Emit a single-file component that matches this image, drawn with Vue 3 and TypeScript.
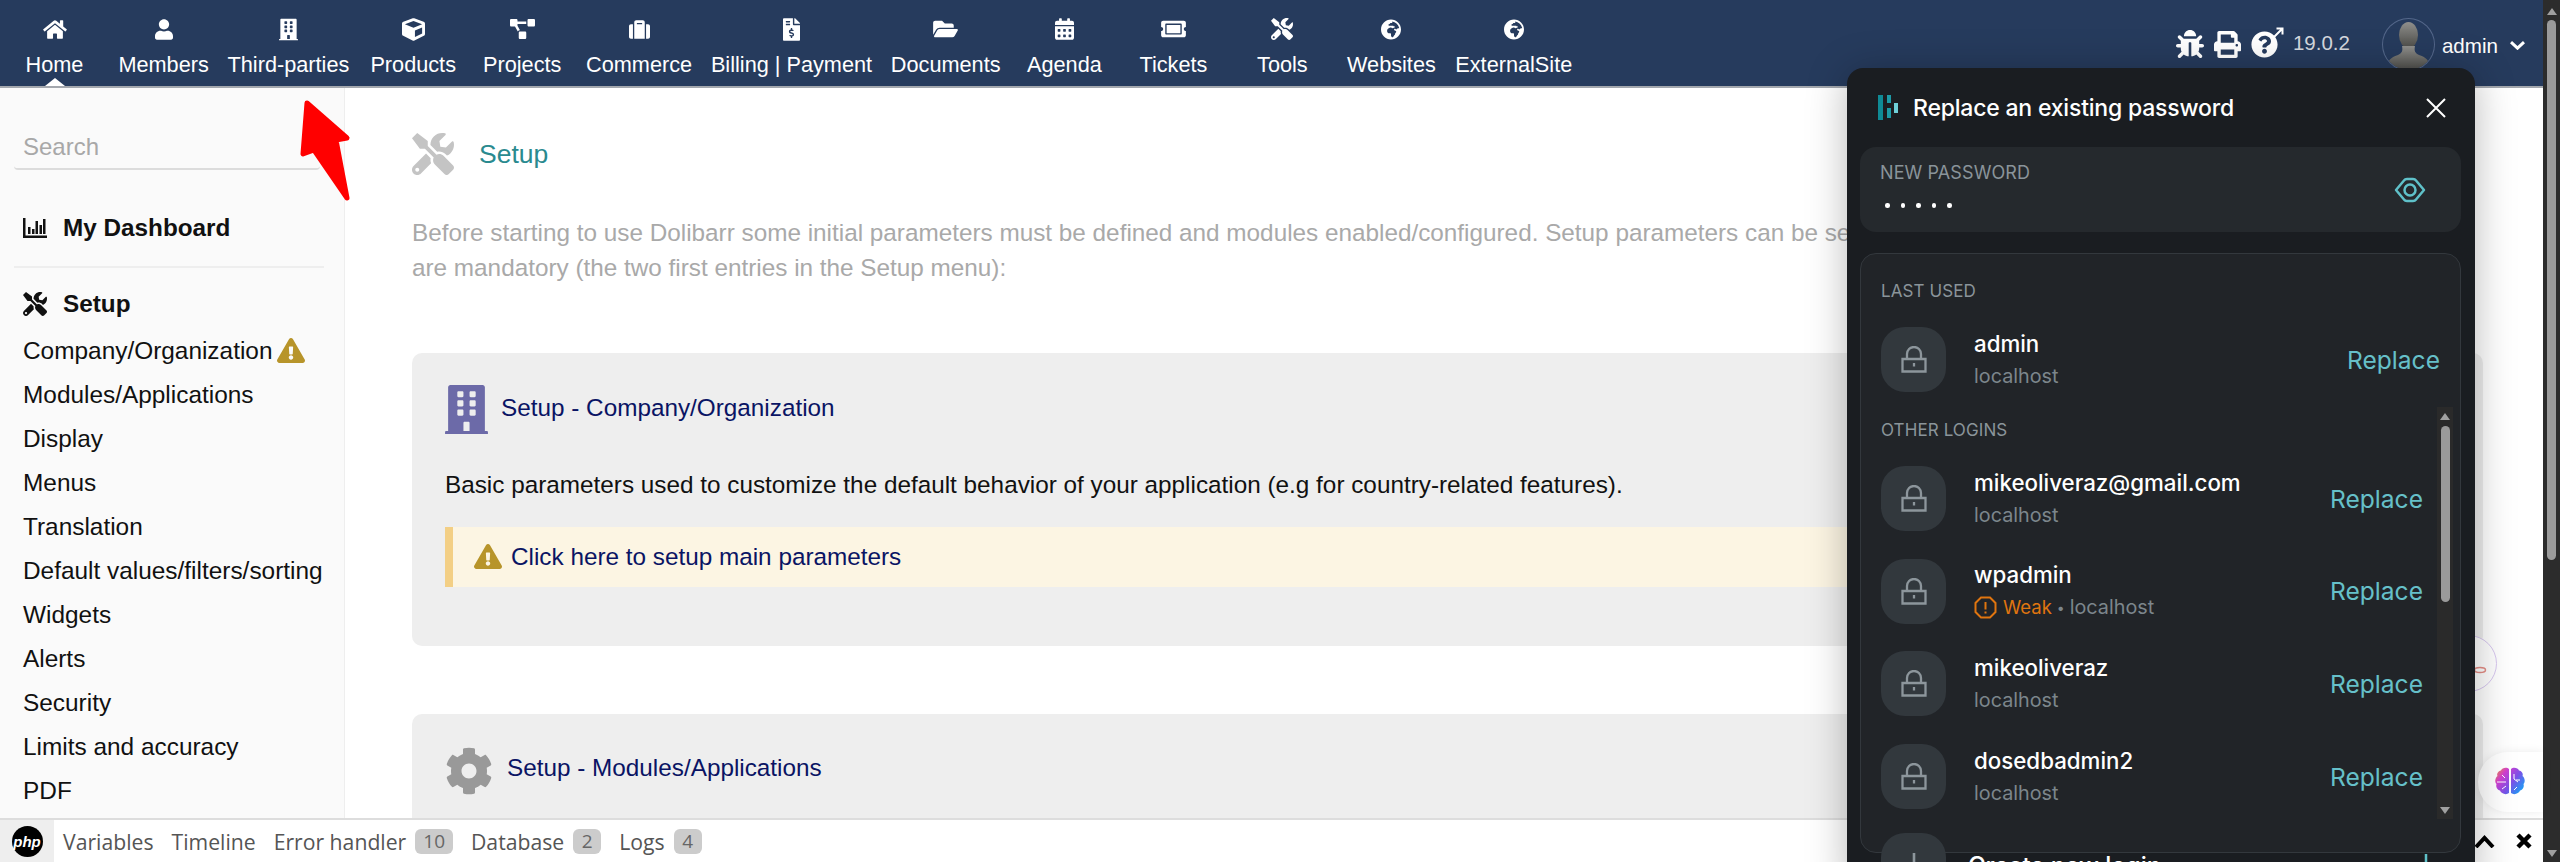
<script setup lang="ts">
interface Glyph { vb: string; d: string }

const icons: Record<string, Glyph> = {
  home: { vb: '0 0 576 512', d: 'M280.37 148.26L96 300.11V464a16 16 0 0 0 16 16l112.06-.29a16 16 0 0 0 15.92-16V368a16 16 0 0 1 16-16h64a16 16 0 0 1 16 16v95.64a16 16 0 0 0 16 16.05L464 480a16 16 0 0 0 16-16V300L295.67 148.26a12.19 12.19 0 0 0-15.3 0zM571.6 251.47L488 182.56V44.05a12 12 0 0 0-12-12h-56a12 12 0 0 0-12 12v72.61L318.47 43a48 48 0 0 0-61 0L4.34 251.47a12 12 0 0 0-1.6 16.9l25.5 31A12 12 0 0 0 45.15 301l235.22-193.74a12.19 12.19 0 0 1 15.3 0L530.9 301a12 12 0 0 0 16.9-1.6l25.5-31a12 12 0 0 0-1.7-16.93z' },
  user: { vb: '0 0 448 512', d: 'M224 256c70.7 0 128-57.3 128-128S294.7 0 224 0 96 57.3 96 128s57.3 128 128 128zm89.6 32h-16.7c-22.2 10.2-46.9 16-72.9 16s-50.6-5.8-72.9-16h-16.7C60.2 288 0 348.2 0 422.4V464c0 26.5 21.5 48 48 48h352c26.5 0 48-21.5 48-48v-41.6c0-74.2-60.2-134.4-134.4-134.4z' },
  building: { vb: '0 0 448 512', d: 'M436 480h-20V24c0-13.255-10.745-24-24-24H56C42.745 0 32 10.745 32 24v456H12c-6.627 0-12 5.373-12 12v20h448v-20c0-6.627-5.373-12-12-12zM128 76c0-6.627 5.373-12 12-12h40c6.627 0 12 5.373 12 12v40c0 6.627-5.373 12-12 12h-40c-6.627 0-12-5.373-12-12V76zm0 96c0-6.627 5.373-12 12-12h40c6.627 0 12 5.373 12 12v40c0 6.627-5.373 12-12 12h-40c-6.627 0-12-5.373-12-12v-40zm52 148h-40c-6.627 0-12-5.373-12-12v-40c0-6.627 5.373-12 12-12h40c6.627 0 12 5.373 12 12v40c0 6.627-5.373 12-12 12zm76 160h-64v-84c0-6.627 5.373-12 12-12h40c6.627 0 12 5.373 12 12v84zm64-172c0 6.627-5.373 12-12 12h-40c-6.627 0-12-5.373-12-12v-40c0-6.627 5.373-12 12-12h40c6.627 0 12 5.373 12 12v40zm0-96c0 6.627-5.373 12-12 12h-40c-6.627 0-12-5.373-12-12v-40c0-6.627 5.373-12 12-12h40c6.627 0 12 5.373 12 12v40zm0-96c0 6.627-5.373 12-12 12h-40c-6.627 0-12-5.373-12-12V76c0-6.627 5.373-12 12-12h40c6.627 0 12 5.373 12 12v40z' },
  cube: { vb: '0 0 512 512', d: 'M239.1 6.3l-208 78c-18.7 7-31.1 25-31.1 45v225.1c0 18.2 10.3 34.8 26.5 42.9l208 104c13.5 6.8 29.4 6.8 42.9 0l208-104c16.3-8.1 26.5-24.8 26.5-42.9V129.3c0-20-12.4-37.9-31.1-44.9l-208-78C262 2.2 250 2.2 239.1 6.3zM256 68.4l192 72v1.1l-192 78-192-78v-1.1l192-72zm32 356V275.5l160-65v133.9l-160 80z' },
  project: { vb: '0 0 640 512', d: 'M384 320H256c-17.67 0-32 14.33-32 32v128c0 17.67 14.33 32 32 32h128c17.67 0 32-14.33 32-32V352c0-17.67-14.33-32-32-32zM192 32c0-17.67-14.33-32-32-32H32C14.33 0 0 14.33 0 32v128c0 17.67 14.33 32 32 32h95.72l73.16 128.04C211.98 300.98 232.4 288 256 288h.28L192 175.51V128h224V64H192V32zM608 0H480c-17.67 0-32 14.33-32 32v128c0 17.67 14.33 32 32 32h128c17.67 0 32-14.33 32-32V32c0-17.67-14.33-32-32-32z' },
  suitcase: { vb: '0 0 512 512', d: 'M128 480h256V80c0-26.5-21.5-48-48-48H176c-26.5 0-48 21.5-48 48v400zm64-384h128v32H192V96zm320 80v256c0 26.5-21.5 48-48 48h-48V128h48c26.5 0 48 21.5 48 48zM96 480H48c-26.5 0-48-21.5-48-48V176c0-26.5 21.5-48 48-48h48v352z' },
  invoice: { vb: '0 0 384 512', d: 'M377 105L279.1 7c-4.5-4.5-10.6-7-17-7H256v128h128v-6.1c0-6.3-2.5-12.4-7-16.9zm-153 31V0H24C10.7 0 0 10.7 0 24v464c0 13.3 10.7 24 24 24h336c13.3 0 24-10.7 24-24V160H248c-13.2 0-24-10.8-24-24zM64 72c0-4.42 3.58-8 8-8h80c4.42 0 8 3.58 8 8v16c0 4.42-3.58 8-8 8H72c-4.42 0-8-3.58-8-8V72zm0 80v-16c0-4.42 3.58-8 8-8h80c4.42 0 8 3.58 8 8v16c0 4.42-3.58 8-8 8H72c-4.42 0-8-3.58-8-8zm144 263.88V440c0 4.42-3.58 8-8 8h-16c-4.42 0-8-3.58-8-8v-24.29c-11.29-.58-22.27-4.52-31.37-11.35-3.9-2.93-4.1-8.77-.57-12.14l11.75-11.21c2.77-2.64 6.89-2.76 10.13-.73 3.87 2.42 8.26 3.72 12.82 3.72h28.11c6.5 0 11.8-5.92 11.8-13.19 0-5.95-3.61-11.19-8.77-12.73l-45-13.5c-18.59-5.58-31.58-23.42-31.58-43.39 0-24.52 19.05-44.44 42.67-45.07V232c0-4.42 3.58-8 8-8h16c4.42 0 8 3.58 8 8v24.29c11.29.58 22.27 4.51 31.37 11.35 3.9 2.93 4.1 8.77.57 12.14l-11.75 11.21c-2.77 2.64-6.89 2.76-10.13.73-3.87-2.43-8.26-3.72-12.82-3.72h-28.11c-6.5 0-11.8 5.92-11.8 13.19 0 5.95 3.61 11.19 8.77 12.73l45 13.5c18.59 5.58 31.58 23.42 31.58 43.39 0 24.53-19.05 44.44-42.67 45.07z' },
  folder: { vb: '0 0 576 512', d: 'M572.694 292.093L500.27 416.248A63.997 63.997 0 0 1 444.989 448H45.025c-18.523 0-30.064-20.093-20.731-36.093l72.424-124.155A64 64 0 0 1 152 256h399.964c18.523 0 30.064 20.093 20.73 36.093zM152 224h328v-48c0-26.51-21.49-48-48-48H272l-64-64H48C21.49 64 0 85.49 0 112v278.046l69.077-118.418C86.214 242.25 117.989 224 152 224z' },
  calendar: { vb: '0 0 448 512', d: 'M0 464c0 26.5 21.5 48 48 48h352c26.5 0 48-21.5 48-48V192H0v272zm320-196c0-6.6 5.4-12 12-12h40c6.6 0 12 5.4 12 12v40c0 6.6-5.4 12-12 12h-40c-6.6 0-12-5.4-12-12v-40zm0 128c0-6.6 5.4-12 12-12h40c6.6 0 12 5.4 12 12v40c0 6.6-5.4 12-12 12h-40c-6.6 0-12-5.4-12-12v-40zM192 268c0-6.6 5.4-12 12-12h40c6.6 0 12 5.4 12 12v40c0 6.6-5.4 12-12 12h-40c-6.6 0-12-5.4-12-12v-40zm0 128c0-6.6 5.4-12 12-12h40c6.6 0 12 5.4 12 12v40c0 6.6-5.4 12-12 12h-40c-6.6 0-12-5.4-12-12v-40zM64 268c0-6.6 5.4-12 12-12h40c6.6 0 12 5.4 12 12v40c0 6.6-5.4 12-12 12H76c-6.6 0-12-5.4-12-12v-40zm0 128c0-6.6 5.4-12 12-12h40c6.6 0 12 5.4 12 12v40c0 6.6-5.4 12-12 12H76c-6.6 0-12-5.4-12-12v-40zM400 64h-48V16c0-8.8-7.2-16-16-16h-32c-8.8 0-16 7.2-16 16v48H160V16c0-8.8-7.2-16-16-16h-32c-8.8 0-16 7.2-16 16v48H48C21.5 64 0 85.5 0 112v48h448v-48c0-26.5-21.5-48-48-48z' },
  ticket: { vb: '0 0 576 512', d: 'M128 160h320v192H128V160zm400 96c0 26.51 21.49 48 48 48v96c0 26.51-21.49 48-48 48H48c-26.51 0-48-21.49-48-48v-96c26.51 0 48-21.49 48-48s-21.49-48-48-48v-96c0-26.51 21.49-48 48-48h480c26.51 0 48 21.49 48 48v96c-26.51 0-48 21.49-48 48zm-48-104c0-13.255-10.745-24-24-24H120c-13.255 0-24 10.745-24 24v208c0 13.255 10.745 24 24 24h336c13.255 0 24-10.745 24-24V152z' },
  tools: { vb: '0 0 512 512', d: 'M501.1 395.7L384 278.6c-23.1-23.1-57.6-27.6-85.4-13.9L192 158.1V96L64 0 0 64l96 128h62.1l106.6 106.6c-13.6 27.8-9.2 62.3 13.9 85.4l117.1 117.1c14.6 14.6 38.2 14.6 52.7 0l52.7-52.7c14.5-14.6 14.5-38.2 0-52.7zM331.7 225c28.3 0 54.9 11 74.9 31l19.4 19.4c15.8-6.9 30.8-16.5 43.8-29.5 37.1-37.1 49.7-89.3 37.9-136.7-2.2-9-13.5-12.1-20.1-5.5l-74.4 74.4-67.9-11.3L334 98.9l74.4-74.4c6.6-6.6 3.4-17.9-5.7-20.2-47.4-11.7-99.6.9-136.6 37.9-28.5 28.5-41.9 66.1-41.2 103.6l82.1 82.1c8.1-1.9 16.5-2.9 24.7-2.9zm-103.9 82l-56.7-56.7L18.7 402.8c-25 25-25 65.5 0 90.5s65.5 25 90.5 0l123.6-123.6c-7.6-19.9-9.9-41.6-5-62.7zM64 472c-13.2 0-24-10.8-24-24 0-13.3 10.7-24 24-24s24 10.7 24 24c0 13.2-10.7 24-24 24z' },
  globe: { vb: '0 0 496 512', d: 'M248 8C111.03 8 0 119.03 0 256s111.03 248 248 248 248-111.03 248-248S384.97 8 248 8zm160 215.5v6.93c0 5.87-3.32 11.24-8.57 13.86l-15.39 7.7a15.485 15.485 0 0 1-15.53-.97l-18.21-12.14a15.52 15.52 0 0 0-13.5-1.81l-2.65.88c-9.7 3.23-13.66 14.79-7.99 23.3l13.24 19.86c2.87 4.31 7.71 6.9 12.89 6.9h8.21c8.56 0 15.5 6.94 15.5 15.5v11.34c0 3.35-1.09 6.62-3.1 9.3l-18.74 24.98c-1.42 1.9-2.39 4.1-2.83 6.43l-4.3 22.83c-.62 3.29-2.29 6.29-4.76 8.56a159.608 159.608 0 0 0-25 29.16l-13.03 19.55a27.756 27.756 0 0 1-23.09 12.36c-10.51 0-20.12-5.94-24.82-15.34a78.902 78.902 0 0 1-8.33-35.29V367.5c0-8.56-6.94-15.5-15.5-15.5h-25.88c-14.49 0-28.38-5.76-38.63-16a54.659 54.659 0 0 1-16-38.63v-14.06c0-17.19 8.1-33.38 21.85-43.7l27.58-20.69a54.663 54.663 0 0 1 32.78-10.93h.89c8.48 0 16.85 1.97 24.43 5.77l14.72 7.36c3.68 1.84 7.93 2.14 11.83.84l47.31-15.77c6.33-2.11 10.6-8.03 10.6-14.7 0-8.56-6.94-15.5-15.5-15.5h-10.09c-4.11 0-8.05-1.63-10.96-4.54l-6.92-6.92a15.493 15.493 0 0 0-10.96-4.54H199.5c-8.56 0-15.5-6.94-15.5-15.5v-4.4c0-7.11 4.84-13.31 11.74-15.04l14.45-3.61c3.74-.94 7-3.23 9.14-6.44l8.08-12.11c2.87-4.31 7.71-6.9 12.89-6.9h24.21c8.56 0 15.5-6.94 15.5-15.5v-21.7C359.23 71.63 422.86 131.02 448 208v15.5z' },
  bug: { vb: '0 0 512 512', d: 'M511.988 288.9c-.478 17.43-15.217 31.1-32.653 31.1H424v16c0 21.864-4.882 42.584-13.6 61.145l60.228 60.228c12.496 12.497 12.496 32.758 0 45.255-12.498 12.497-32.759 12.496-45.256 0l-54.736-54.736C345.886 467.965 314.351 480 280 480V236c0-6.627-5.373-12-12-12h-24c-6.627 0-12 5.373-12 12v244c-34.351 0-65.886-12.035-90.636-32.108l-54.736 54.736c-12.498 12.497-32.759 12.496-45.256 0-12.496-12.497-12.496-32.758 0-45.255l60.228-60.228C92.882 378.584 88 357.864 88 336v-16H32.666C15.23 320 .491 306.33.013 288.9-.484 270.816 14.028 256 32 256h56v-58.745l-46.628-46.628c-12.496-12.497-12.496-32.758 0-45.255 12.498-12.497 32.758-12.497 45.256 0L141.255 160h229.489l54.627-54.627c12.498-12.497 32.758-12.497 45.256 0 12.496 12.497 12.496 32.758 0 45.255L424 197.255V256h56c17.972 0 32.484 14.816 31.988 32.9zM257 0c-61.856 0-112 50.144-112 112h224C369 50.144 318.856 0 257 0z' },
  print: { vb: '0 0 512 512', d: 'M448 192V77.25c0-8.49-3.37-16.62-9.37-22.63L393.37 9.37c-6-6-14.14-9.37-22.63-9.37H96C78.33 0 64 14.33 64 32v160c-35.35 0-64 28.65-64 64v112c0 8.84 7.16 16 16 16h48v96c0 17.67 14.33 32 32 32h320c17.67 0 32-14.33 32-32v-96h48c8.84 0 16-7.16 16-16V256c0-35.35-28.65-64-64-64zm-64 256H128v-96h256v96zm0-224H128V64h192v48c0 8.84 7.16 16 16 16h48v96zm48 72c-13.25 0-24-10.75-24-24 0-13.26 10.75-24 24-24s24 10.74 24 24c0 13.25-10.75 24-24 24z' },
  question: { vb: '0 0 512 512', d: 'M504 256c0 136.997-111.043 248-248 248S8 392.997 8 256C8 119.083 119.043 8 256 8s248 111.083 248 248zM262.655 90c-54.497 0-89.255 22.957-116.549 63.758-3.536 5.286-2.353 12.415 2.715 16.258l34.699 26.31c5.205 3.947 12.621 3.008 16.665-2.122 17.864-22.658 30.113-35.797 57.303-35.797 20.429 0 45.698 13.148 45.698 32.958 0 14.976-12.363 22.667-32.534 33.976C247.128 238.528 216 254.941 216 296v4c0 6.627 5.373 12 12 12h56c6.627 0 12-5.373 12-12v-1.333c0-28.462 83.186-29.647 83.186-106.667 0-58.002-60.165-102-116.531-102zM256 338c-25.365 0-46 20.635-46 46 0 25.364 20.635 46 46 46s46-20.636 46-46c0-25.365-20.635-46-46-46z' },
  warning: { vb: '0 0 576 512', d: 'M569.517 440.013C587.975 472.007 564.806 512 527.94 512H48.054c-36.937 0-59.999-40.055-41.577-71.987L246.423 24.987c18.467-32.009 64.72-31.951 83.154 0l239.94 416.026zM288 354c-25.405 0-46 20.595-46 46s20.595 46 46 46 46-20.595 46-46-20.595-46-46-46zm-43.673-165.346l7.418 136c.347 6.364 5.609 11.346 11.982 11.346h48.546c6.373 0 11.635-4.982 11.982-11.346l7.418-136c.375-6.874-5.098-12.654-11.982-12.654h-63.383c-6.884 0-12.356 5.78-11.981 12.654z' },
  cog: { vb: '0 0 512 512', d: 'M487.4 315.7l-42.6-24.6c4.3-23.2 4.3-47 0-70.2l42.6-24.6c4.9-2.8 7.1-8.6 5.5-14-11.1-35.6-30-67.8-54.7-94.6-3.8-4.1-10-5.1-14.8-2.3L380.8 110c-17.9-15.4-38.5-27.3-60.8-35.1V25.8c0-5.6-3.9-10.5-9.4-11.7-36.7-8.2-74.3-7.8-109.2 0-5.5 1.2-9.4 6.1-9.4 11.7V75c-22.2 7.9-42.8 19.8-60.8 35.1L88.7 85.5c-4.9-2.8-11-1.9-14.8 2.3-24.7 26.7-43.6 58.9-54.7 94.6-1.7 5.4.6 11.2 5.5 14L67.3 221c-4.3 23.2-4.3 47 0 70.2l-42.6 24.6c-4.9 2.8-7.1 8.6-5.5 14 11.1 35.6 30 67.8 54.7 94.6 3.8 4.1 10 5.1 14.8 2.3l42.6-24.6c17.9 15.4 38.5 27.3 60.8 35.1v49.2c0 5.6 3.9 10.5 9.4 11.7 36.7 8.2 74.3 7.8 109.2 0 5.5-1.2 9.4-6.1 9.4-11.7v-49.2c22.2-7.9 42.8-19.8 60.8-35.1l42.6 24.6c4.9 2.8 11 1.9 14.8-2.3 24.7-26.7 43.6-58.9 54.7-94.6 1.5-5.5-.7-11.3-5.6-14.1zM256 336c-44.1 0-80-35.9-80-80s35.9-80 80-80 80 35.9 80 80-35.9 80-80 80z' }
};

const navItems = [
  { label: 'Home', icon: 'home', w: 24, h: 21, active: true },
  { label: 'Members', icon: 'user', w: 18, h: 21 },
  { label: 'Third-parties', icon: 'building', w: 19, h: 23 },
  { label: 'Products', icon: 'cube', w: 23, h: 23 },
  { label: 'Projects', icon: 'project', w: 25, h: 20 },
  { label: 'Commerce', icon: 'suitcase', w: 21, h: 21 },
  { label: 'Billing | Payment', icon: 'invoice', w: 17, h: 23 },
  { label: 'Documents', icon: 'folder', w: 25, h: 22 },
  { label: 'Agenda', icon: 'calendar', w: 19, h: 22 },
  { label: 'Tickets', icon: 'ticket', w: 25, h: 22 },
  { label: 'Tools', icon: 'tools', w: 22, h: 22 },
  { label: 'Websites', icon: 'globe', w: 20, h: 21 },
  { label: 'ExternalSite', icon: 'globe', w: 20, h: 21 }
];

const setupLinks = [
  'Modules/Applications', 'Display', 'Menus', 'Translation', 'Default values/filters/sorting',
  'Widgets', 'Alerts', 'Security', 'Limits and accuracy', 'PDF'
];

const debugTabs = [
  { label: 'Variables' },
  { label: 'Timeline' },
  { label: 'Error handler', count: 10 },
  { label: 'Database', count: 2 },
  { label: 'Logs', count: 4 }
];

const otherLogins = [
  { name: 'mikeoliveraz@gmail.com', weak: false },
  { name: 'wpadmin', weak: true },
  { name: 'mikeoliveraz', weak: false },
  { name: 'dosedbadmin2', weak: false }
];
</script>

<template>
  <div class="app">
    <div class="page">
      <header class="topbar">
        <nav class="menu">
          <a v-for="item in navItems" :key="item.label" class="menu-item">
            <span class="menu-icon">
              <svg :viewBox="icons[item.icon].vb" :width="item.w" :height="item.h" fill="#fff"><path :d="icons[item.icon].d" /></svg>
            </span>
            <span class="menu-label">{{ item.label }}</span>
            <i v-if="item.active" class="menu-caret"></i>
          </a>
        </nav>
        <div class="top-right">
          <svg :viewBox="icons.bug.vb" width="28" height="28" fill="#fff"><path :d="icons.bug.d" /></svg>
          <svg :viewBox="icons.print.vb" width="27" height="27" fill="#fff"><path :d="icons.print.d" /></svg>
          <span class="help">
            <svg :viewBox="icons.question.vb" width="27" height="27" fill="#fff"><path :d="icons.question.d" /></svg>
            <svg class="help-arrow" viewBox="0 0 12 12" width="12" height="12" fill="none" stroke="#fff" stroke-width="2"><path d="M1 11 10 2M4.500 1.500H10.500V7.500" /></svg>
          </span>
          <span class="version">19.0.2</span>
          <span class="avatar">
            <svg viewBox="0 0 51 51" width="51" height="51">
              <defs>
                <linearGradient id="bust" x1="0" y1="0" x2="0" y2="1">
                  <stop offset="0" stop-color="#8f8f8c" />
                  <stop offset="1" stop-color="#4c4c48" />
                </linearGradient>
              </defs>
              <ellipse cx="25.500" cy="16" rx="9.500" ry="13" fill="url(#bust)" />
              <path d="M19 27c1 5 0 7-4 9-6 2-9 4-10 9l2 6h37l2-6c-1-5-4-7-10-9-4-2-5-4-4-9z" fill="url(#bust)" />
            </svg>
          </span>
          <span class="user-name">admin</span>
          <svg viewBox="0 0 15 9" width="15" height="9" fill="none" stroke="#fff" stroke-width="3" class="user-chevron"><path d="M1 1.200 7.500 7.200 14 1.200" /></svg>
        </div>
      </header>

      <div class="content">
        <aside class="sidebar">
          <input class="search" placeholder="Search" />
          <div class="side-head">
            <svg viewBox="0 0 24 20" width="24" height="20" fill="#111">
              <path d="M0 0h2.500v17.500H24V20H0z" />
              <path d="M5 9h2.500v7H5zM9 11h2.500v5H9zM12.500 3H15v13h-2.500zM16.500 7H19v9h-2.500zM20 1h2.500v15H20z" />
            </svg>
            <span>My Dashboard</span>
          </div>
          <div class="side-divider"></div>
          <div class="side-head">
            <svg :viewBox="icons.tools.vb" width="24" height="24" fill="#111"><path :d="icons.tools.d" /></svg>
            <span>Setup</span>
          </div>
          <a class="side-link">
            Company/Organization
            <svg :viewBox="icons.warning.vb" width="28" height="25" fill="#b7942a"><path :d="icons.warning.d" /></svg>
          </a>
          <a v-for="link in setupLinks" :key="link" class="side-link">{{ link }}</a>
        </aside>

        <main class="main">
          <div class="page-title">
            <svg :viewBox="icons.tools.vb" width="42" height="42" fill="#c4c4c4"><path :d="icons.tools.d" /></svg>
            <span>Setup</span>
          </div>
          <p class="intro">
            Before starting to use Dolibarr some initial parameters must be defined and modules enabled/configured. Setup parameters can be set from the menu on the left. The following two sections<br />
            are mandatory (the two first entries in the Setup menu):
          </p>

          <section class="card">
            <div class="card-title">
              <svg :viewBox="icons.building.vb" width="43" height="49" fill="#6c6aa8"><path :d="icons.building.d" /></svg>
              <a>Setup - Company/Organization</a>
            </div>
            <p class="card-text">Basic parameters used to customize the default behavior of your application (e.g for country-related features).</p>
            <div class="notice">
              <svg :viewBox="icons.warning.vb" width="28" height="25" fill="#b7942a"><path :d="icons.warning.d" /></svg>
              <a>Click here to setup main parameters</a>
            </div>
          </section>

          <section class="card card-modules">
            <div class="card-title">
              <svg :viewBox="icons.cog.vb" width="48" height="48" fill="#999"><path :d="icons.cog.d" /></svg>
              <a>Setup - Modules/Applications</a>
            </div>
          </section>
        </main>
      </div>

      <footer class="debugbar">
        <span class="php-tab"><span class="php-logo">php</span></span>
        <div class="debug-tabs">
          <span v-for="tab in debugTabs" :key="tab.label" class="debug-tab">
            {{ tab.label }}
            <b v-if="tab.count" class="debug-count">{{ tab.count }}</b>
          </span>
        </div>
        <div class="debug-actions">
          <svg viewBox="0 0 21 13" width="21" height="13" fill="none" stroke="#000" stroke-width="4"><path d="M2 12 10.500 3 19 12" /></svg>
          <svg viewBox="0 0 16 16" width="16" height="16" fill="none" stroke="#000" stroke-width="4.500"><path d="M2 2 14 14M14 2 2 14" /></svg>
        </div>
      </footer>
    </div>

    <div class="page-scroll">
      <i class="arrow-up"></i>
      <i class="scroll-thumb"></i>
      <i class="arrow-down"></i>
    </div>

    <!-- red pointer drawn over the screenshot -->
    <svg class="pointer" viewBox="0 0 60 115" width="60" height="115" fill="#f00" stroke="#f00" stroke-width="5" stroke-linejoin="round">
      <path d="M12 8 52 43 41 45 52 103 19 55 8 59z" />
    </svg>

    <span class="float-badge">
      <svg viewBox="0 0 14 8" width="14" height="8" fill="none" stroke="#e58e86" stroke-width="1.500"><ellipse cx="7" cy="4" rx="5.500" ry="2.500" /></svg>
    </span>

    <button class="brain-btn" aria-label="AI assistant">
      <svg viewBox="0 0 32 32" width="32" height="32">
        <defs>
          <linearGradient id="brain" x1="0" y1="0" x2="1" y2="0.700">
            <stop offset="0" stop-color="#f59a2f" />
            <stop offset="0.300" stop-color="#d33fd0" />
            <stop offset="0.650" stop-color="#7b52e8" />
            <stop offset="1" stop-color="#1f9bf5" />
          </linearGradient>
        </defs>
        <path fill="url(#brain)" d="M15 3c-2-2-7-1.500-8 1.500C4 5 2.500 8 3.500 10 1 12 .5 16 2.500 18c-1 3 1 6 3.500 6.500 1 3 6 5 9 2.500zM17 3c2-2 7-1.500 8 1.500 3 .5 4.500 3.500 3.500 5.500 2.500 2 3 6 1 8 1 3-1 6-3.500 6.500-1 3-6 5-9 2.500z" />
        <path fill="none" stroke="#fff" stroke-width="1" d="M3 16h9M8 9l3 3M8 23l4-3M20 8v5l4 3M20 24l3-3M26 14h-4" />
      </svg>
    </button>

    <!-- password manager popup, sits on top of the page -->
    <div class="vault">
      <div class="vault-head">
        <svg viewBox="0 0 20 25" width="20" height="25">
          <path fill="#0f8a95" d="M0 0h5v25H0z" />
          <path fill="#1d9aa6" d="M9 0h4v8H9zM9 13h4v10H9z" />
          <path fill="#6fd0d8" d="M16 8h4v10h-4z" />
        </svg>
        <span class="vault-title">Replace an existing password</span>
        <svg class="vault-close" viewBox="0 0 20 20" width="20" height="20" fill="none" stroke="#fff" stroke-width="2"><path d="M1 1 19 19M19 1 1 19" /></svg>
      </div>

      <div class="pw-box">
        <div class="pw-info">
          <span class="caps">NEW PASSWORD</span>
          <span class="pw-dots"><i v-for="n in 5" :key="n"></i></span>
        </div>
        <svg viewBox="0 0 32 32" width="32" height="32" fill="none" stroke="#5fc1c9" stroke-width="2.500" stroke-linejoin="round">
          <path d="M2 16 10 6.500Q11 5 13 5H19Q21 5 22 6.500L30 16 22 25.500Q21 27 19 27H13Q11 27 10 25.500z" />
          <circle cx="16" cy="16" r="5.500" />
        </svg>
      </div>

      <div class="list-box">
        <div class="caps list-label">LAST USED</div>
        <div class="login login-last">
          <span class="tile">
            <svg viewBox="0 0 26 27" width="26" height="27" fill="none" stroke="#8d969c" stroke-width="2.300">
              <path d="M6 13V8a7 7 0 0 1 14 0v5M1.500 13h23v12.500h-23z" />
              <path d="M13 17v3.500" />
            </svg>
          </span>
          <span class="login-text">
            <span class="login-name">admin</span>
            <span class="login-site">localhost</span>
          </span>
          <a class="replace">Replace</a>
        </div>

        <div class="other">
          <div class="other-list">
            <div class="caps list-label">OTHER LOGINS</div>
            <div v-for="entry in otherLogins" :key="entry.name" class="login">
              <span class="tile">
                <svg viewBox="0 0 26 27" width="26" height="27" fill="none" stroke="#8d969c" stroke-width="2.300">
                  <path d="M6 13V8a7 7 0 0 1 14 0v5M1.500 13h23v12.500h-23z" />
                  <path d="M13 17v3.500" />
                </svg>
              </span>
              <span class="login-text">
                <span class="login-name">{{ entry.name }}</span>
                <span class="login-site">
                  <template v-if="entry.weak">
                    <svg class="weak-icon" viewBox="0 0 23 23" width="23" height="23" fill="none" stroke="#e0750f" stroke-width="2"><path d="M7 1.500h9l5.500 5.500v9L16 21.500H7L1.500 16V7z" /><path d="M11.500 6v7.500M11.500 15.500v2" /></svg>
                    <span class="weak">Weak</span>
                    <span class="sep">•</span>
                  </template>
                  localhost
                </span>
              </span>
              <a class="replace">Replace</a>
            </div>
          </div>
          <div class="mini-scroll">
            <i class="arrow-up"></i>
            <i class="mini-thumb"></i>
            <i class="arrow-down"></i>
          </div>
        </div>

        <div class="login login-create">
          <span class="tile">
            <svg viewBox="0 0 28 28" width="28" height="28" fill="none" stroke="#8d969c" stroke-width="2.600"><path d="M14 1v26M1 14h26" /></svg>
          </span>
          <span class="create-text">Create new login</span>
          <svg class="create-plus" viewBox="0 0 24 24" width="24" height="24" fill="none" stroke="#5fc1c9" stroke-width="2.500"><path d="M12 0v24M0 12h24" /></svg>
        </div>
      </div>
    </div>
  </div>
</template>

<style>
html, body {
  margin: 0;
  height: 862px;
  overflow: hidden;
  background: #fff;
}
</style>

<style scoped>
.app {
  position: relative;
  display: flex;
  width: 2560px;
  height: 862px;
  overflow: hidden;
  font-family: "Liberation Sans", Arial, sans-serif;
  font-size: 24.4px;
  color: #111;
}
.page {
  flex: 1;
  min-width: 0;
  display: flex;
  flex-direction: column;
}

/* top bar */
.topbar {
  display: flex;
  height: 86px;
  flex: none;
  box-sizing: content-box;
  background: #263b5d;
  border-bottom: 2px solid #a3a7ad;
  color: #fff;
}
.menu {
  display: flex;
}
.menu-item {
  position: relative;
  display: flex;
  flex-direction: column;
  align-items: center;
  box-sizing: border-box;
  min-width: 109px;
  padding: 17px 9.400px 0;
}
.menu-icon {
  display: flex;
  align-items: center;
  justify-content: center;
  height: 24px;
}
.menu-label {
  margin-top: 11px;
  font-size: 21.7px;
  line-height: 26px;
  white-space: nowrap;
}
.menu-caret {
  position: absolute;
  bottom: 0;
  left: 50%;
  margin-left: -10px;
  border-left: 10px solid transparent;
  border-right: 10px solid transparent;
  border-bottom: 8px solid #fff;
}
.top-right {
  display: flex;
  align-items: center;
  margin-left: auto;
  padding: 0 18px 0 0;
  gap: 10px;
  height: 88px;
}
.help {
  position: relative;
  display: flex;
  margin-right: 5px;
}
.help-arrow {
  position: absolute;
  top: -4px;
  right: -6px;
}
.version {
  font-size: 20.5px;
  color: #d5d8de;
  margin-top: -2px;
}
.avatar {
  width: 51px;
  height: 51px;
  margin-left: 23px;
  border-radius: 50%;
  box-sizing: border-box;
  box-shadow: 0 0 0 1px #54678a;
  overflow: hidden;
}
.avatar svg {
  display: block;
}
.user-name {
  font-size: 20.6px;
  margin-left: -2px;
  margin-top: 4px;
}
.user-chevron {
  margin-left: 2px;
  margin-top: 2px;
}

/* sidebar + page body */
.content {
  flex: 1;
  min-height: 0;
  display: flex;
  overflow: hidden;
}
.sidebar {
  flex: none;
  box-sizing: border-box;
  width: 345px;
  padding: 43px 20px 0 14px;
  background: #fafafa;
  border-right: 1px solid #eee;
  overflow: hidden;
}
.search {
  display: block;
  box-sizing: border-box;
  width: 306px;
  height: 39px;
  padding: 0 0 6px 9px;
  border: 0;
  border-bottom: 2px solid #dcdcdc;
  border-radius: 4px;
  background: transparent;
  outline: 0;
  font: 24px "Liberation Sans", Arial, sans-serif;
}
.search::placeholder {
  color: #a8a8a8;
}
.side-head {
  display: flex;
  align-items: center;
  gap: 16px;
  height: 44px;
  margin-top: 36px;
  padding-left: 9px;
  font-weight: 700;
  font-size: 24.3px;
}
.side-divider {
  height: 2px;
  margin-top: 16px;
  width: 310px;
  background: #eee;
}
.side-divider + .side-head {
  margin-top: 13.500px;
  margin-bottom: 3px;
}
.side-link {
  display: flex;
  align-items: center;
  gap: 4.500px;
  height: 44.100px;
  padding-left: 9px;
  white-space: nowrap;
  color: #111;
}
.main {
  flex: 1;
  min-width: 0;
  padding: 45px 60px 0 67px;
  font-size: 24.300px;
}
.page-title {
  display: flex;
  align-items: center;
  gap: 25px;
  height: 42px;
  font-size: 26.500px;
  color: #2a8a8f;
}
.intro {
  margin: 39.500px 0 0;
  line-height: 35px;
  color: #a9a9a9;
  white-space: nowrap;
}
.card {
  margin-top: 68.500px;
  box-sizing: border-box;
  height: 292.500px;
  padding: 32px 33px 0;
  border-radius: 10px;
  background: #eee;
}
.card-modules {
  margin-top: 68.500px;
  height: 200px;
  padding-top: 33px;
}
.card-title {
  display: flex;
  align-items: center;
  gap: 13px;
}
.card-title a {
  margin-top: -4px;
}
.card-modules .card-title a {
  margin-top: -6px;
  margin-left: 1px;
}
.card-title a,
.notice a {
  color: #0a1464;
}
.card-text {
  margin: 33px 0 0;
  line-height: 35px;
  color: #111;
}
.notice {
  display: flex;
  align-items: center;
  gap: 9px;
  height: 60px;
  margin-top: 24.500px;
  padding-left: 21px;
  border-left: 8px solid #f3cf85;
  background: #fcf5e3;
}

/* debug bar */
.debugbar {
  flex: none;
  display: flex;
  align-items: center;
  height: 44px;
  border-top: 2px solid #ddd;
  background: #fff;
  box-sizing: border-box;
  font-family: "Open Sans", sans-serif;
  font-size: 21.200px;
  color: #555;
}
.php-tab {
  display: flex;
  align-items: center;
  justify-content: center;
  width: 54px;
  height: 100%;
  background: #eee;
}
.php-logo {
  display: flex;
  align-items: center;
  justify-content: center;
  width: 31px;
  height: 31px;
  border-radius: 50%;
  background: #000;
  color: #fff;
  font: italic 700 15px "Liberation Sans", Arial, sans-serif;
}
.debug-tabs {
  display: flex;
  align-items: center;
  gap: 18px;
  margin-left: 9px;
}
.debug-tab {
  display: flex;
  align-items: center;
  gap: 9px;
}
.debug-count {
  min-width: 28px;
  box-sizing: border-box;
  padding: 0 8px;
  line-height: 25px;
  text-align: center;
  border-radius: 6px;
  background: #ccc;
  color: #666;
  font-weight: 400;
  font-size: 19px;
}
.debug-actions {
  display: flex;
  align-items: center;
  gap: 21px;
  margin-left: auto;
  margin-right: 11px;
}

/* browser scrollbars */
.page-scroll {
  flex: none;
  width: 17px;
  display: flex;
  flex-direction: column;
  align-items: center;
  background: #2c2c2c;
  padding-top: 8px;
  box-sizing: border-box;
}
.arrow-up,
.arrow-down {
  flex: none;
  border-left: 5px solid transparent;
  border-right: 5px solid transparent;
}
.arrow-up {
  border-bottom: 7px solid #a0a0a0;
}
.arrow-down {
  border-top: 7px solid #a0a0a0;
  margin-top: auto;
  margin-bottom: 5px;
}
.scroll-thumb {
  width: 9px;
  height: 540px;
  margin-top: 5px;
  border-radius: 5px;
  background: #9b9b9b;
}

/* overlays */
.pointer {
  position: absolute;
  left: 295px;
  top: 95px;
}
.float-badge {
  position: absolute;
  left: 2440px;
  top: 635px;
  display: flex;
  align-items: center;
  justify-content: flex-end;
  box-sizing: border-box;
  width: 57px;
  height: 57px;
  padding: 12px 9px 0 0;
  border-radius: 50%;
  border: 1.500px solid #d8c8f0;
  background: #fff;
}
.brain-btn {
  position: absolute;
  left: 2478px;
  top: 752px;
  display: flex;
  align-items: center;
  width: 65px;
  height: 60px;
  padding: 0 0 0 16px;
  border: 0;
  border-radius: 30px 0 0 30px;
  background: #fff;
  box-shadow: 0 0 10px rgba(0, 0, 0, 0.08);
}
.vault {
  position: absolute;
  left: 1847px;
  top: 68px;
  width: 628px;
  height: 820px;
  border-radius: 16px 16px 0 0;
  background: #1a1d21;
  box-shadow: 0 4px 40px rgba(0, 0, 0, 0.28);
  font-family: Inter, "Noto Sans", sans-serif;
  color: #fff;
}
.vault-head {
  display: flex;
  align-items: center;
  height: 79px;
  padding: 0 29px 0 31px;
  box-sizing: border-box;
}
.vault-title {
  margin-left: 15px;
  font-size: 23px;
  font-weight: 500;
  letter-spacing: -0.2px;
}
.vault-close {
  margin-left: auto;
}
.pw-box {
  display: flex;
  align-items: center;
  justify-content: space-between;
  box-sizing: border-box;
  height: 85px;
  margin: 0 14px 0 13px;
  padding: 0 35px 10px 20px;
  border-radius: 16px;
  background: #25292d;
}
.pw-box > svg {
  margin-top: 10px;
}
.pw-info {
  display: flex;
  flex-direction: column;
  gap: 18px;
}
.caps {
  font-size: 17px;
  line-height: 24px;
  letter-spacing: 0.1px;
  color: #8a949a;
}
.pw-info .caps {
  font-size: 18px;
}
.pw-dots {
  display: flex;
  gap: 11px;
  padding-left: 5px;
}
.pw-dots i {
  width: 4.500px;
  height: 4.500px;
  border-radius: 50%;
  background: #fff;
}
.list-box {
  box-sizing: border-box;
  height: 600px;
  margin: 21px 14px 0 13px;
  padding: 25px 0 0 20px;
  border: 1px solid #33383d;
  border-radius: 16px;
  background: #212428;
}
.login {
  display: flex;
  align-items: center;
  height: 65px;
  margin-top: 27.700px;
  padding-right: 14px;
}
.list-label + .login {
  margin-top: 24px;
}
.login-last {
  padding-right: 20px;
}
.tile {
  flex: none;
  display: flex;
  align-items: center;
  justify-content: center;
  width: 65px;
  height: 65px;
  border-radius: 24px;
  background: #32383d;
}
.login-text {
  display: flex;
  flex-direction: column;
  margin-left: 28px;
}
.login-name {
  line-height: 33px;
  font-size: 22.300px;
  font-weight: 500;
  white-space: nowrap;
}
.login-site {
  display: flex;
  align-items: center;
  line-height: 33px;
  font-size: 19.800px;
  color: #7c868c;
}
.weak-icon {
  margin-right: 6px;
}
.weak {
  color: #e0750f;
  font-size: 18.500px;
}
.sep {
  margin: 0 5px;
  font-size: 14px;
}
.replace {
  margin-left: auto;
  font-size: 24.600px;
  color: #66c0c9;
}
.other {
  display: flex;
  height: 412px;
  margin-top: 15px;
  overflow: hidden;
}
.other-list {
  flex: 1;
  padding-top: 11px;
}
.mini-scroll {
  flex: none;
  width: 16px;
  margin-right: 7px;
  padding-top: 6px;
  box-sizing: border-box;
  display: flex;
  flex-direction: column;
  align-items: center;
  background: #2a2a2a;
}
.mini-thumb {
  width: 9px;
  height: 176px;
  margin-top: 6px;
  border-radius: 5px;
  background: #9a9a9a;
}
.login-create {
  margin-top: 14px;
  padding-right: 22px;
}
.create-text {
  margin-left: 22px;
  font-size: 24px;
  font-weight: 500;
}
.create-plus {
  margin-left: auto;
}
</style>
